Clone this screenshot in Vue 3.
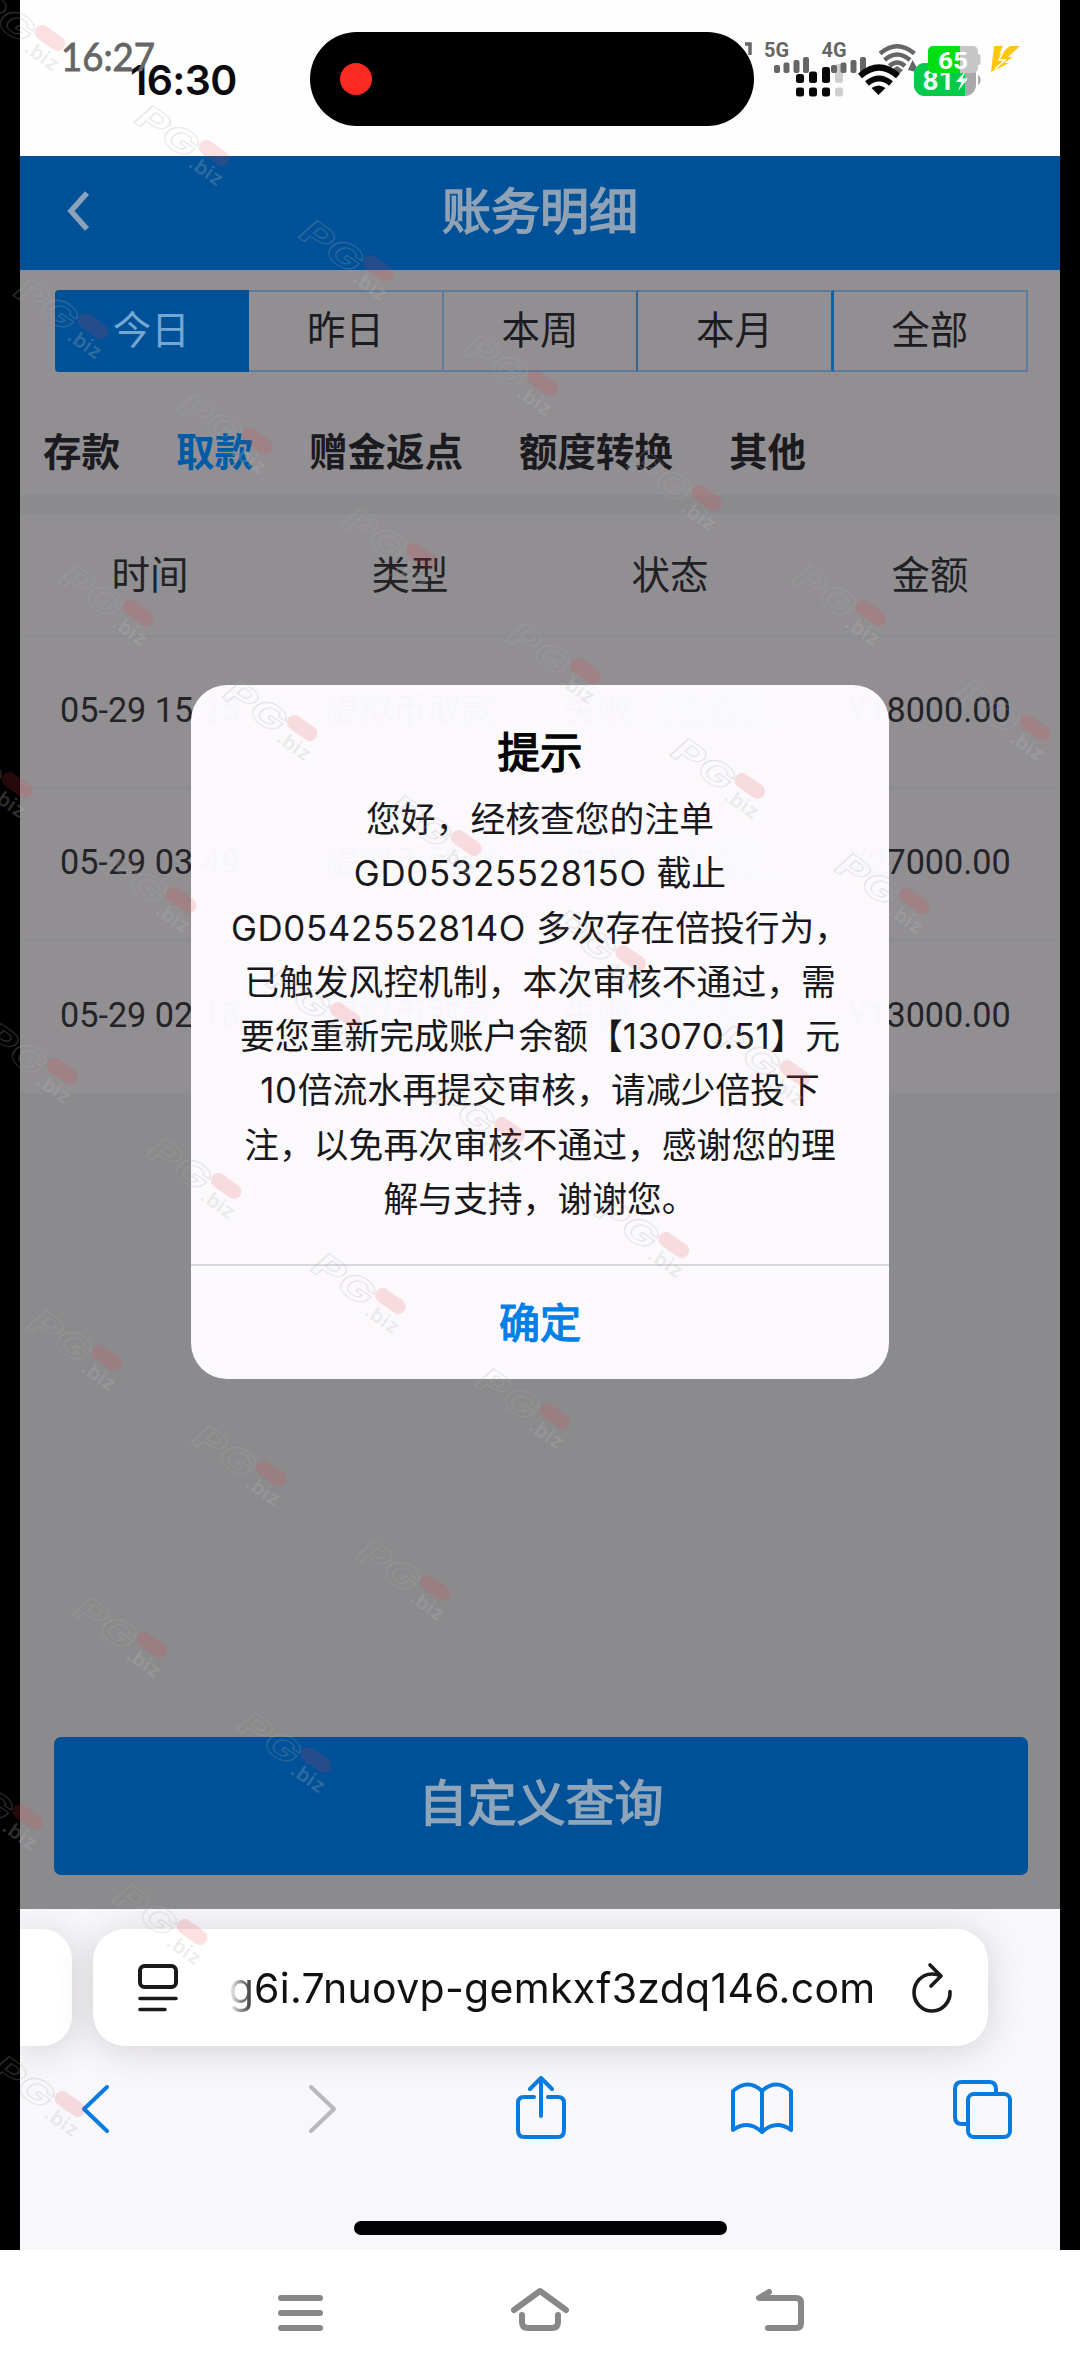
<script setup>
const periods = ['今日', '昨日', '本周', '本月', '全部']
const kinds = ['存款', '取款', '赠金返点', '额度转换', '其他']
const columns = ['时间', '类型', '状态', '金额']
const rows = [
  { time: '05-29 15:25', amount: '¥18000.00' },
  { time: '05-29 03:49', amount: '¥27000.00' },
  { time: '05-29 02:18', amount: '¥13000.00' },
]
// Latin runs are split out so that they can be tracked wider than the Chinese text
const message = [
  '您好，经核查您的注单',
  'GD0532552815O 截止',
  'GD0542552814O 多次存在倍投行为，',
  '已触发风控机制，本次审核不通过，需',
  '要您重新完成账户余额【13070.51】元',
  '10倍流水再提交审核，请减少倍投下',
  '注，以免再次审核不通过，感谢您的理',
  '解与支持，谢谢您。',
].map((line) => line.split(/([A-Z0-9.]+)/).filter(Boolean)
  .map((text) => ({ text, latin: /^[A-Z0-9.]+$/.test(text) })))
// first stamp of each diagonal run and how many stamps it holds
const runs = [
  [50, 38, 7], [93, 326, 6], [138, 613, 5], [17, 785, 5], [62, 1071, 4],
  [107, 1358, 3], [152, 1645, 2], [28, 1817, 2], [70, 2104, 1],
]
const stamps = runs.flatMap(([x, y, n]) =>
  Array.from({ length: n }, (_, i) => ({ x: x + i * 164.2, y: y + i * 115 })))
</script>

<template>
  <div class="screen">
    <div class="phone">
      <div class="ios-status">
        <span class="ios-time">16:30</span>
        <div class="island"><i class="rec"></i></div>
      </div>

      <main class="page">
        <header class="title-bar">
          <svg class="back" width="24" height="42" viewBox="0 0 24 42"><path d="M20 3 4 21 20 39" fill="none" stroke="#8ca2b8" stroke-width="5.500" /></svg>
          <h1>账务明细</h1>
        </header>
        <div class="periods">
          <span v-for="(p, i) in periods" :key="p" :class="['period', 'p' + i, { on: i === 0 }]">{{ p }}</span>
        </div>
        <nav class="kinds">
          <span v-for="(k, i) in kinds" :key="k" :class="{ on: i === 1 }">{{ k }}</span>
        </nav>
        <div class="table">
          <div class="row head"><span v-for="c in columns" :key="c">{{ c }}</span></div>
          <div v-for="r in rows" :key="r.time" class="row">
            <span>{{ r.time }}</span>
            <span>虚拟币取款</span>
            <span class="state">失败<a>【查看】</a></span>
            <span>{{ r.amount }}</span>
          </div>
        </div>
        <button class="query">自定义查询</button>

        <section class="dialog">
          <h2>提示</h2>
          <p><span v-for="(m, i) in message" :key="i" class="line"><span v-for="(t, j) in m" :key="j" :class="{ latin: t.latin }">{{ t.text }}</span></span></p>
          <button>确定</button>
        </section>
      </main>

      <footer class="browser">
        <div class="address-row">
          <div class="prev-tab"></div>
          <div class="address">
            <svg width="42" height="52" viewBox="0 0 42 52" fill="none" stroke="#19191b" stroke-width="4" stroke-linecap="round">
              <rect x="3" y="4" width="36" height="21" rx="4.500" /><path d="M3 36.500H39M3 47.500H28" stroke-width="3.600" />
            </svg>
            <div class="url"><span>g6i.7nuovp-gemkxf3zdq146.com</span></div>
            <svg width="42" height="52" viewBox="0 0 42 52" fill="none" stroke="#19191b" stroke-width="3.600" stroke-linecap="round" stroke-linejoin="round">
              <path d="M39 29.500A18 18.500 0 1 1 21 12Q26 12 30 14M19 3 30 14 20 24" />
            </svg>
          </div>
        </div>
        <div class="tools">
          <svg width="64" height="66" viewBox="0 0 64 66" class="blue"><path d="M42 11 19 33 42 55" /></svg>
          <svg width="64" height="66" viewBox="0 0 64 66" class="faint"><path d="M25 11 48 33 25 55" /></svg>
          <svg width="64" height="66" viewBox="0 0 64 66" class="blue"><path d="M26 21H16Q10 21 10 27V54Q10 61 16 61H50Q56 61 56 54V27Q56 21 50 21H40M33 40V3M22 13 33 2 44 13" /></svg>
          <svg width="64" height="66" viewBox="0 0 64 66" class="blue"><path d="M33 15Q19 2 4 15V54Q19 43 33 56Q47 43 62 54V15Q47 2 33 15V56" /></svg>
          <svg width="64" height="66" viewBox="0 0 64 66" class="blue"><path d="M18 48H12Q5 48 5 41V13Q5 6 12 6H39Q46 6 46 13V18" /><rect x="18" y="18" width="42" height="43" rx="6" /></svg>
        </div>
        <div class="home-line"></div>
      </footer>
    </div>

    <div class="android-nav">
      <svg width="64" height="60" viewBox="0 0 64 60"><path d="M13 15H52M13 30H52M13 45H52" /></svg>
      <svg width="64" height="60" viewBox="0 0 64 60"><path d="M6 27 32 8 58 27M14 32V39Q14 45 20 45H44Q50 45 50 39V32" /></svg>
      <svg width="64" height="60" viewBox="0 0 64 60"><path d="M21 9 11 15H48Q53 15 53 20V40Q53 45 48 45H20" /></svg>
    </div>

    <svg class="status-icons" width="1080" height="156" viewBox="0 0 1080 156">
      <text x="61" y="71" class="clock" textLength="94" lengthAdjust="spacingAndGlyphs">16:27</text>
      <g fill="#08080a">
        <rect x="796" y="74" width="8" height="9" rx="2.500" /><rect x="809" y="71.500" width="8" height="11.500" rx="2.500" /><rect x="822" y="67" width="8" height="16" rx="2.500" />
        <rect x="796" y="87.500" width="8" height="9" rx="2.500" /><rect x="809" y="87.500" width="8" height="9" rx="2.500" /><rect x="822" y="87.500" width="8" height="9" rx="2.500" />
      </g>
      <g fill="#cfcfcf"><rect x="835" y="64" width="8" height="19" rx="2.500" /><rect x="835" y="87.500" width="8" height="9" rx="2.500" /></g>
      <g class="net">
        <path d="M745 44H750V55" fill="none" stroke="#666" stroke-width="3.500" />
        <text x="764" y="57" textLength="25" lengthAdjust="spacingAndGlyphs">5G</text>
        <text x="821.500" y="57" textLength="25" lengthAdjust="spacingAndGlyphs">4G</text>
        <rect x="774" y="65" width="6" height="8" rx="2" /><rect x="783.500" y="62.500" width="6" height="10.500" rx="2" /><rect x="793.500" y="60" width="6" height="13" rx="2" /><rect x="803" y="57" width="6" height="16" rx="2" />
        <rect x="831" y="65" width="6" height="8" rx="2" /><rect x="840.500" y="62.500" width="6" height="10.500" rx="2" /><rect x="850.500" y="60" width="6" height="13" rx="2" /><rect x="860" y="57" width="6" height="16" rx="2" />
      </g>
      <g fill="none" stroke="#666" stroke-width="4.500">
        <path d="M880 53.500Q897 39 914.500 53.500" /><path d="M884.500 60Q897 49 910 60" /><path d="M889.500 66Q897 59 905 66" />
      </g>
      <path d="M891 70 897 66 903 70 900 73H894ZM908 70 912.500 60 916 66V72Z" fill="#666" />
      <g fill="none" stroke="#08080a" stroke-width="6">
        <path d="M860 76Q879 59 898 76" /><path d="M867 83.500Q879 73.500 891 83.500" />
      </g>
      <path d="M871.500 88Q878.500 83 885.500 88L878.500 95Z" fill="#08080a" />
      <rect x="914" y="63" width="62" height="33" rx="11" fill="#a9a9ab" />
      <path d="M925 63H965V96H925A11 11 0 0 1 914 85V74A11 11 0 0 1 925 63Z" fill="#02cb4c" />
      <path d="M978 75A6 6 0 0 1 978 85Z" fill="#a9a9ab" />
      <text x="922.500" y="90" class="pct ios" textLength="32" lengthAdjust="spacingAndGlyphs">81</text>
      <path d="M966 70 956 82H961.500L958 91 968 78.500H962.500Z" fill="#fff" />
      <rect x="928" y="46" width="50" height="27" rx="5" fill="#c6c6c6" />
      <path d="M933 46H960V73H933A5 5 0 0 1 928 68V51A5 5 0 0 1 933 46Z" fill="#02df12" />
      <rect x="976" y="54" width="4.500" height="11" rx="2" fill="#c6c6c6" />
      <text x="938" y="68.500" class="pct" textLength="30" lengthAdjust="spacingAndGlyphs">65</text>
      <path d="M994 46H1003L999 55 1010 46H1020L1008 57H1013L1004 63H1009L991 72Z" fill="#ffc60a" />
      <path d="M1005 48 999 60H1005L995 69" fill="none" stroke="#fff" stroke-width="1.500" />
    </svg>

    <svg class="stamps" width="1080" height="2250" viewBox="0 0 1080 2250">
      <g v-for="(s, i) in stamps" :key="i" :transform="`translate(${s.x} ${s.y}) rotate(35)`">
        <text x="-84" y="21" class="pg" textLength="67" lengthAdjust="spacingAndGlyphs">PG</text>
        <rect x="-17" y="-7.500" width="34" height="15" rx="7.500" fill="#ee3745" fill-opacity=".155" />
        <text x="-15" y="26" class="biz" textLength="37">.biz</text>
      </g>
    </svg>
  </div>
</template>

<style>
body { margin: 0; background: #fff; }
</style>

<style scoped>
.screen { position: relative; width: 1080px; height: 2376px; overflow: hidden; background: #fff; font-family: Inter, "Noto Sans CJK SC", sans-serif; }
.phone { box-sizing: border-box; height: 2250px; padding: 0 20px; background: #000; display: flex; flex-direction: column; }
.ios-status { height: 156px; background: #fefefe; display: flex; align-items: flex-start; }
.ios-time { width: 180px; margin: 55px 0 0 110px; font-size: 41px; line-height: 50px; font-weight: 600; color: #0b0b0d; letter-spacing: -.6px; }
.island { width: 444px; height: 94px; margin-top: 32px; border-radius: 47px; background: #000; display: flex; align-items: center; }
.rec { width: 32px; height: 32px; margin-left: 30px; border-radius: 50%; background: #fb2a20; }

.page { position: relative; height: 1753px; background: #8b8b8d; display: flex; flex-direction: column; }
.title-bar { height: 114px; background: #005198; display: flex; align-items: center; justify-content: center; }
.back { margin: 0 351px 4px -375px; }
h1 { margin: 0; font-size: 49px; line-height: 60px; font-weight: 400; color: #8fa2b6; -webkit-text-stroke: 1.600px #8fa2b6; padding-bottom: 3px; }
.periods { display: flex; padding: 20px 32px 0 35px; background: #918f92; height: 108px; box-sizing: border-box; }
.period { flex: 1; height: 82px; box-sizing: border-box; border: 2px solid #5f7b9f; border-left: 0; text-align: center; font-size: 38.500px; line-height: 77px; color: #1d1c20; }
.period.on { background: #005198; border-color: #005198; color: #74a7d2; border-radius: 4px 0 0 4px; }
.p3 { border-right-color: #0e65a5; border-right-width: 3px; }
.p2 { border-right-color: #34648e; }
.kinds { display: flex; gap: 56px; padding: 0 23px; height: 117px; background: #918f92; font-size: 38.500px; font-weight: 700; color: #1b1a1e; line-height: 148px; }
.kinds .on { color: #005ba6; }
.table { margin-top: 19px; background: #918f92; }
.row { height: 152px; box-sizing: border-box; display: grid; grid-template-columns: repeat(4, 260px); align-items: center; text-align: center; border-bottom: 1px solid #89898c; font: 34.200px/50px Roboto, "Noto Sans CJK SC", sans-serif; color: #242327; white-space: nowrap; padding-bottom: 5px; }
.row:last-child { border-bottom: 0; }
.head { height: 123px; font-size: 38.500px; padding: 2px 0 0; color: #222125; }
.state a { color: #0a62b0; text-decoration: underline; margin-left: 8px; }
.query { margin: 644px 32px 0 34px; height: 138px; border: 0; border-radius: 7px; background: #005198; color: #8fa5ba; -webkit-text-stroke: 1.500px #8fa5ba; font: 49px/1 "Noto Sans CJK SC", sans-serif; padding: 0 0 13px; }

.dialog { position: absolute; left: 171px; top: 529px; width: 698px; height: 694px; border-radius: 36px; background: rgba(254, 252, 255, .978); overflow: hidden; display: flex; flex-direction: column; text-align: center; }
h2 { margin: 38px 0 0; font-size: 42.500px; line-height: 60px; font-weight: 400; color: #060607; -webkit-text-stroke: 1.400px #060607; }
p { margin: 9px 0 0; font-size: 34.800px; line-height: 54.300px; color: #18181a; }
.line { display: block; white-space: pre; }
.latin { letter-spacing: .7px; }
.dialog button { margin-top: auto; height: 115px; border: 0; border-top: 2px solid #d7d6d9; background: none; color: #0080e6; -webkit-text-stroke: 1.300px #0080e6; font: 41px/1 "Noto Sans CJK SC", sans-serif; padding: 0 0 5px; }

.browser { height: 341px; background: #f8f7fb; display: flex; flex-direction: column; overflow: hidden; }
.address-row { display: flex; gap: 21px; padding-top: 20px; height: 117px; }
.prev-tab { width: 52px; height: 117px; background: #fff; border-radius: 0 30px 30px 0; box-shadow: 0 4px 36px rgba(70, 60, 60, .2); }
.address { width: 895px; height: 117px; box-sizing: border-box; padding: 0 35px 0 44px; background: #fff; border-radius: 32px; box-shadow: 0 4px 36px rgba(70, 60, 60, .2); display: flex; align-items: center; justify-content: space-between; }
.url { width: 648px; overflow: hidden; display: flex; justify-content: flex-end; margin-left: 13px; font-size: 41px; line-height: 60px; color: #111113; white-space: nowrap; mask-image: linear-gradient(90deg, transparent, #000 28px); }
.url span { letter-spacing: .3px; }
.tools { display: flex; justify-content: space-between; padding: 0 46px 0 45px; margin-top: 30px; }
.tools svg { fill: none; stroke-width: 4; stroke-linecap: round; stroke-linejoin: round; }
.blue { stroke: #087be0; }
.faint { stroke: #b9b8bb; }
.home-line { width: 373px; height: 14px; margin: 79px auto 0; border-radius: 7px; background: #020203; }
.android-nav { height: 126px; display: flex; justify-content: center; gap: 176px; padding-top: 33px; box-sizing: border-box; }
.android-nav svg { fill: none; stroke: #888; stroke-width: 6; stroke-linecap: round; stroke-linejoin: round; }

.status-icons, .stamps { position: absolute; left: 0; top: 0; pointer-events: none; }
.clock { font: 38px Lato, sans-serif; fill: #666; stroke: #666; stroke-width: .8px; }
.net { fill: #666; font: 700 20px Roboto, sans-serif; }
.pct { font: 700 24px Roboto, sans-serif; fill: #fff; }
.pct.ios { font-size: 27px; fill: #eefcf2; }
.pg { font: italic 700 34px Inter, sans-serif; fill: none; stroke: rgba(172, 170, 172, .25); stroke-width: 1.200px; }
.biz { font: 600 20px Inter, sans-serif; fill: rgba(185, 185, 187, .26); }
</style>
